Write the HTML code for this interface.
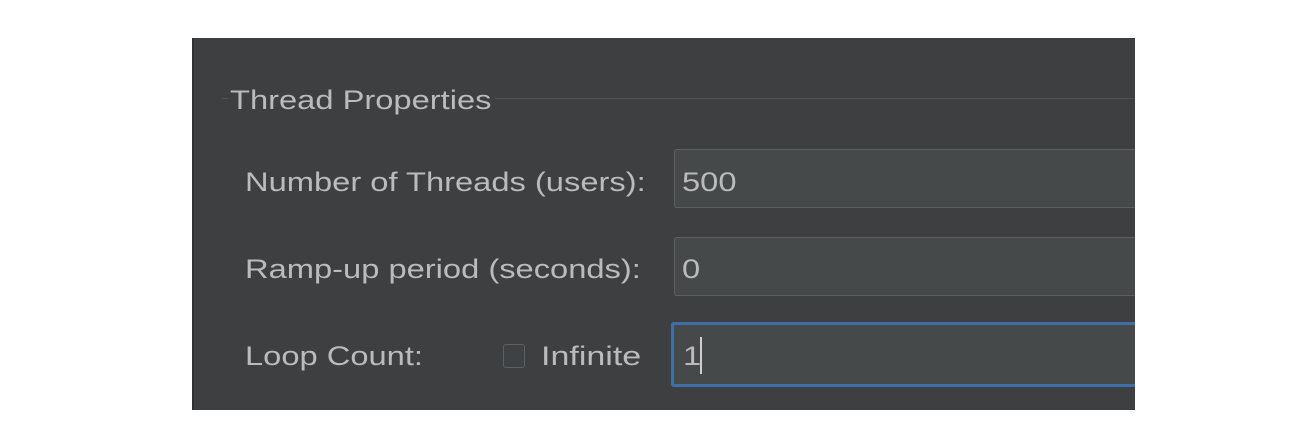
<!DOCTYPE html>
<html><head><style>
body{margin:0;width:1299px;height:434px;background:#fff;position:relative;overflow:hidden;font-family:"Liberation Sans",sans-serif;}
.p{position:absolute;left:192px;top:38px;width:943px;height:372px;background:#3d3f41;border-left:2px solid #2f3133;box-sizing:border-box;}
.t{position:absolute;color:#bbbbbb;font-size:27px;line-height:30px;white-space:nowrap;transform:scaleX(1.21);transform-origin:0 0;}
.in{position:absolute;background:#45494a;border:1px solid #5e6162;border-right:none;border-radius:3px 0 0 3px;box-sizing:border-box;}
</style></head><body>
<div class="p"></div>
<div style="position:absolute;left:222px;top:98px;width:6px;height:1px;background:#505354"></div>
<div style="position:absolute;left:495px;top:98px;width:640px;height:1px;background:#505354"></div>
<div class="t" style="left:230px;top:85px">Thread Properties</div>
<div class="t" style="left:245px;top:167px">Number of Threads (users):</div>
<div class="t" style="left:245px;top:254px">Ramp-up period (seconds):</div>
<div class="t" style="left:245px;top:341px">Loop Count:</div>
<div style="position:absolute;left:503px;top:344px;width:22px;height:24px;border:1px solid #5e6162;border-radius:3px;background:#3f4244;box-sizing:border-box"></div>
<div class="t" style="left:541px;top:341px;transform:scaleX(1.26)">Infinite</div>
<div class="in" style="left:674px;top:149px;width:461px;height:59px"></div>
<div class="t" style="left:682px;top:167px">500</div>
<div class="in" style="left:674px;top:237px;width:461px;height:59px"></div>
<div class="t" style="left:682px;top:254px">0</div>
<div class="in" style="left:671px;top:322px;width:464px;height:65px;border:3px solid #3e6fa6;border-right:none;background:#45494a"></div>
<div class="t" style="left:683px;top:341px">1</div>
<div style="position:absolute;left:700px;top:337px;width:2px;height:37px;background:#cfcfcf"></div>
</body></html>
